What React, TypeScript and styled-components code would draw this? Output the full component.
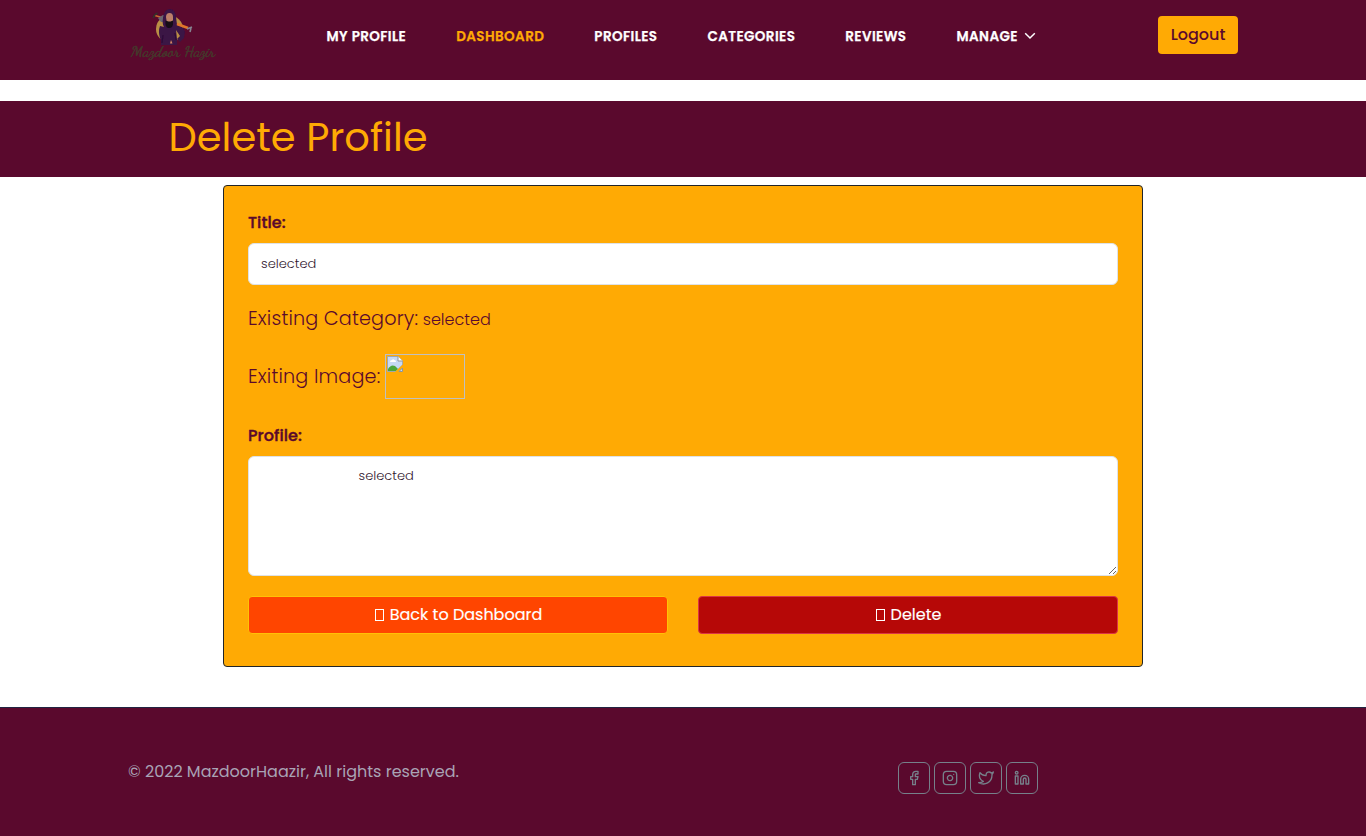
import React from "react";
import styled, { createGlobalStyle } from "styled-components";
import { FiFacebook, FiInstagram, FiTwitter, FiLinkedin } from "react-icons/fi";

const maroon = "#5a092d";
const orange = "#ffaa04";

const GlobalStyle = createGlobalStyle`
  *, *::before, *::after { box-sizing: border-box; }
  body {
    margin: 0;
    background: #fff;
    color: ${maroon};
    font-family: Poppins, Inter, sans-serif;
    font-size: 16px;
    line-height: 24px;
    overflow-x: hidden;
  }
`;

const Header = styled.header`
  display: flex;
  align-items: flex-start;
  height: 80px;
  padding: 0 128px;
  background: ${maroon};
`;

const LogoLink = styled.a`
  width: 198.5px;
  height: 64px;
  svg { display: block; }
`;

const Nav = styled.nav`
  display: flex;
  gap: 50px;
  padding-top: 26px;
`;

const NavLink = styled.a<{ $active?: boolean }>`
  display: flex;
  align-items: center;
  height: 22px;
  color: ${p => (p.$active ? orange : "#fff")};
  font-size: 13.5px;
  font-weight: 600;
  letter-spacing: 0.4px;
  white-space: nowrap;
  -webkit-text-stroke: 0.25px currentColor;
  svg { margin: -2px 0 0 6px; }
`;

const LogoutButton = styled.button`
  width: 80px;
  height: 38px;
  margin: 16px 0 0 auto;
  padding: 0;
  border: 0;
  border-radius: 4px;
  background: ${orange};
  color: ${maroon};
  font: inherit;
  font-weight: 500;
`;

const TitleBand = styled.div`
  height: 76px;
  margin-top: 21px;
  padding: 12px 168.5px 16px;
  background: ${maroon};
`;

const PageTitle = styled.h1`
  margin: 0;
  color: ${orange};
  font-size: 40px;
  font-weight: 400;
  line-height: 48px;
`;

const Card = styled.form`
  width: 920px;
  height: 482px;
  margin: 8px auto 40px;
  padding: 24px;
  border: 1px solid #212529;
  border-radius: 4px;
  background: ${orange};
`;

const Label = styled.label`
  display: block;
  padding-top: 1px;
  margin-bottom: 8px;
  font-weight: 500;
  letter-spacing: 0.08px;
  -webkit-text-stroke: 0.4px currentColor;
`;

const fieldStyle = `
  display: block;
  width: 100%;
  border: 1px solid #dee2e6;
  border-radius: 6px;
  background: #fff;
  color: #32172f;
  font-family: inherit;
  font-size: 13px;
  font-weight: 300;
  outline: none;
`;

const TextInput = styled.input`
  ${fieldStyle}
  height: 42px;
  padding: 0 12px;
`;

const TextArea = styled.textarea`
  ${fieldStyle}
  height: 120px;
  padding: 9px 12px;
  line-height: 20px;
  text-indent: 97.5px;
`;

const ExistingRow = styled.div<{ $top: number; $height: number; $align: string }>`
  display: flex;
  align-items: ${p => p.$align};
  gap: 4.5px;
  height: ${p => p.$height}px;
  margin-top: ${p => p.$top}px;
  line-height: 30px;
`;

const ExistingName = styled.span`
  font-size: 19.2px;
  font-weight: 300;
  letter-spacing: 0.18px;
  white-space: nowrap;
`;

const ExistingValue = styled.span`
  font-weight: 300;
`;

const MissingImage = styled.span`
  display: block;
  width: 80px;
  height: 45px;
  padding: 1px;
  border: 1px solid #c0c0c0;
  svg { display: block; }
`;

const ProfileField = styled.div`
  margin-top: 24px;
`;

const Actions = styled.div`
  display: grid;
  grid-template-columns: 1fr 1fr;
  gap: 30px;
  margin-top: 20px;
`;

const ActionButton = styled.button<{ $bg: string; $edge: string }>`
  display: flex;
  align-items: center;
  justify-content: center;
  gap: 6px;
  height: 38px;
  padding: 0 0 0 1px;
  border: 1px solid ${p => p.$edge};
  border-radius: 4px;
  background: ${p => p.$bg};
  color: #fff;
  font: inherit;
  -webkit-text-stroke: 0.15px currentColor;
`;

const GlyphBox = styled.span`
  width: 9px;
  height: 12px;
  border: 1px solid currentColor;
`;

const Footer = styled.footer`
  display: flex;
  justify-content: space-between;
  height: 129px;
  padding: 51px 328px 0 128px;
  border-top: 1px solid #212541;
  background: ${maroon};
  color: #a9a3b5;
`;

const Copyright = styled.p`
  margin: 0;
  padding-top: 1px;
`;

const Socials = styled.div`
  display: flex;
  gap: 4px;
  padding-top: 3px;
`;

const SocialLink = styled.a`
  display: flex;
  align-items: center;
  justify-content: center;
  width: 32px;
  height: 32px;
  border: 1px solid #76808a;
  border-radius: 6px;
  color: #76808a;
`;

const Logo = () => (
  <svg width="90" height="64" viewBox="0 0 90 64">
    <defs>
      <filter id="soft" x="-10%" y="-10%" width="120%" height="120%">
        <feGaussianBlur stdDeviation="0.5" />
      </filter>
    </defs>
    <g filter="url(#soft)">
      <ellipse cx="41.500" cy="29" rx="13.500" ry="13.500" fill="#b98f45" />
      <path d="M27 15.500l10 3" stroke="#c9692f" strokeWidth="1.600" />
      <path d="M25.500 18q0-3 4-5" stroke="#33302a" strokeWidth="1.600" fill="none" />
      <path d="M30 18l5-3 3 1v6l-5 0z" fill="#6a6670" />
      <path d="M36 27q-2-3-1-9 1-9 7-9 5 0 6 8l1 8q7 1 8 7l-1 6-4 4-3-3v6H33v-4l-1-3q-2-7 0-12z" fill="#3a1245" />
      <path d="M48 30l1 9 3-3z" fill="#b98f45" />
      <path d="M34 43l1-8M47 33l1 7" stroke="#270b30" strokeWidth="0.800" />
      <path d="M38 17q0-4 3.500-4t3.500 4v5l-3 2h-3z" fill="#bd8069" />
      <path d="M37.500 20.500l3 1h2l2.500-1v4q-1 3.500-4 3.500t-3.500-4z" fill="#140f17" />
      <path d="M49 24l11 4" stroke="#e0762a" strokeWidth="2.600" />
      <path d="M59 29l5-2M62 32l1-4" stroke="#85828f" strokeWidth="1.600" />
      <path d="M42 43.500l1-3.500 1.500 3.500z" fill="#d98c65" />
      <text
        x="3"
        y="56"
        textLength="84"
        lengthAdjust="spacingAndGlyphs"
        fontFamily="'Dancing Script', Pacifico, 'Brush Script MT', 'Liberation Serif', cursive"
        fontSize="13"
        fill="#453a2c"
        stroke="#453a2c"
        strokeWidth="0.400"
      >
        Mazdoor Hazir
      </text>
    </g>
  </svg>
);

const BrokenImageIcon = () => (
  <svg width="16" height="16" viewBox="0 0 16 16">
    <path d="M0.500 0.500H11L15.500 5V9L9 15.500H0.500Z" fill="#c6d9f5" stroke="#a2a7ad" />
    <path d="M11 0.500V5h4.500" fill="#fff" stroke="#8f959b" />
    <path d="M3 6q0-2 2-2 1-1.500 2.500 0 1.500 0 1.500 2z" fill="#fff" />
    <path d="M1 15v-2q3-5 7-3l3 3-2 2z" fill="#4ca63b" />
    <path d="M8 16L16 8.500V11.500L11.500 16z" fill={orange} />
    <path d="M12 15.500h3.500V12z" fill="#c6d9f5" stroke="#8f959b" />
  </svg>
);

const links = [
  { text: "MY PROFILE" },
  { text: "DASHBOARD", active: true },
  { text: "PROFILES" },
  { text: "CATEGORIES" },
  { text: "REVIEWS" },
];

export default function App() {
  return (
    <>
      <GlobalStyle />
      <Header>
        <LogoLink><Logo /></LogoLink>
        <Nav>
          {links.map(l => (
            <NavLink key={l.text} $active={l.active}>{l.text}</NavLink>
          ))}
          <NavLink>
            MANAGE
            <svg width="12" height="8" viewBox="0 0 12 8" fill="none" stroke="#fff" strokeWidth="1.500">
              <path d="M1.200 1.200L6 6l4.800-4.800" />
            </svg>
          </NavLink>
        </Nav>
        <LogoutButton>Logout</LogoutButton>
      </Header>
      <main>
        <TitleBand><PageTitle>Delete Profile</PageTitle></TitleBand>
        <Card onSubmit={e => e.preventDefault()}>
          <Label htmlFor="title">Title:</Label>
          <TextInput id="title" defaultValue="selected" />
          <ExistingRow $top={19} $height={30} $align="baseline">
            <ExistingName>Existing Category:</ExistingName>
            <ExistingValue>selected</ExistingValue>
          </ExistingRow>
          <ExistingRow $top={20} $height={45} $align="center">
            <ExistingName>Exiting Image:</ExistingName>
            <MissingImage><BrokenImageIcon /></MissingImage>
          </ExistingRow>
          <ProfileField>
            <Label htmlFor="profile">Profile:</Label>
            <TextArea id="profile" defaultValue="selected" spellCheck={false} />
          </ProfileField>
          <Actions>
            <ActionButton type="button" $bg="#ff4500" $edge="#ffc107">
              <GlyphBox />Back to Dashboard
            </ActionButton>
            <ActionButton type="submit" $bg="#b60807" $edge="#dc3545">
              <GlyphBox />Delete
            </ActionButton>
          </Actions>
        </Card>
      </main>
      <Footer>
        <Copyright>© 2022 MazdoorHaazir, All rights reserved.</Copyright>
        <Socials>
          <SocialLink><FiFacebook size={16} /></SocialLink>
          <SocialLink><FiInstagram size={16} /></SocialLink>
          <SocialLink><FiTwitter size={16} /></SocialLink>
          <SocialLink><FiLinkedin size={16} /></SocialLink>
        </Socials>
      </Footer>
    </>
  );
}
